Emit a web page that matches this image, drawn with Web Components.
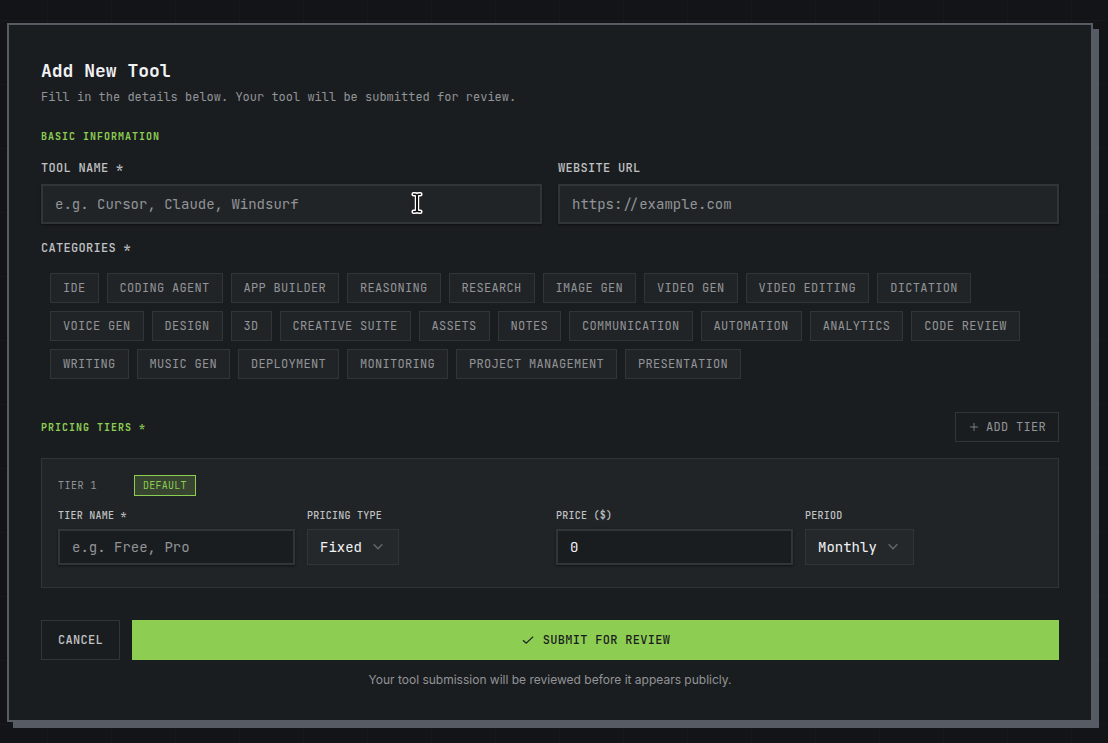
<!DOCTYPE html>
<html lang="en">
<head>
    <meta charset="UTF-8">
    <meta name="viewport" content="width=device-width, initial-scale=1.0">
    <title>Add New Tool</title>
    <style>
        :root {
            --page-bg: #131418;
            --page-line: #16181b;
            --panel-bg: #1a1d20;
            --raised-bg: #212427;
            --control-bg: #25282b;
            --frame: #575b63;
            --border: #323538;
            --text: #f1f2f4;
            --label: #c0c2c4;
            --muted: #929497;
            --accent: #8dce52;
            --mono: "JetBrains Mono", "DejaVu Sans Mono", monospace;
            --sans: Inter, "Liberation Sans", sans-serif;
        }

        body {
            margin: 0;
            padding: 23px 15px 15px 7px;
            font-family: var(--mono);
            font-size: 12px;
            line-height: 16px;
            color: var(--text);
            background-color: var(--page-bg);
            background-image:
                linear-gradient(to right, var(--page-line) 1px, transparent 1px),
                linear-gradient(to bottom, var(--page-line) 1px, transparent 1px);
            background-size: 64px 64px;
            background-position: 47px 20px;
        }
    </style>
</head>
<body>
    <tool-form></tool-form>

    <script>
        class FormPanel extends HTMLElement {
            constructor() {
                super();
                this.attachShadow({ mode: 'open' });
            }

            connectedCallback() {
                this.shadowRoot.innerHTML = `
                <style>
                    :host {
                        display: block;
                        padding: 32px;
                        background: var(--panel-bg);
                        border: 2px solid var(--frame);
                        box-shadow: 6px 6px 0 var(--frame);
                    }

                    h1 {
                        margin: 0;
                        font-size: 18px;
                        line-height: 28px;
                        font-weight: 600;
                    }

                    p {
                        margin: 4px 0 24px;
                        color: var(--muted);
                    }
                </style>
                <h1><slot name="title"></slot></h1>
                <p><slot name="description"></slot></p>
                <slot></slot>
                `;
            }
        }

        class SectionTitle extends HTMLElement {
            constructor() {
                super();
                this.attachShadow({ mode: 'open' });
            }

            connectedCallback() {
                this.shadowRoot.innerHTML = `
                <style>
                    :host {
                        display: block;
                        color: var(--accent);
                    }

                    h2 {
                        margin: 0;
                        font-size: 10px;
                        line-height: 15px;
                        font-weight: 600;
                        letter-spacing: 0.1em;
                        text-transform: uppercase;
                    }
                </style>
                <h2><slot></slot></h2>
                `;
            }
        }

        /* Text input with its label; "compact" is the smaller one used in a tier */
        class TextField extends HTMLElement {
            constructor() {
                super();
                this.attachShadow({ mode: 'open' });
            }

            connectedCallback() {
                const label = this.getAttribute('label');
                const type = this.getAttribute('type') || 'text';
                const placeholder = this.getAttribute('placeholder') || '';
                const value = this.getAttribute('value') || '';
                this.shadowRoot.innerHTML = `
                <style>
                    :host {
                        display: flex;
                        flex-direction: column;
                        gap: 8px;
                        position: relative;
                        min-width: 0;
                    }

                    label {
                        font-weight: 500;
                        letter-spacing: 0.025em;
                        text-transform: uppercase;
                        color: var(--label);
                    }

                    input {
                        box-sizing: border-box;
                        width: 100%;
                        height: 40px;
                        margin: 0;
                        padding: 0 12px;
                        font: 14px/20px var(--mono);
                        color: var(--text);
                        background: var(--raised-bg);
                        border: 2px solid var(--border);
                        border-radius: 0;
                        outline: none;
                        box-shadow: 0 1px 2px rgba(0, 0, 0, 0.5);
                        appearance: textfield;
                    }

                    input:focus {
                        border-color: var(--accent);
                    }

                    input::placeholder {
                        color: var(--muted);
                        opacity: 1;
                    }

                    :host([compact]) {
                        gap: 6px;
                    }

                    :host([compact]) label {
                        font-size: 10px;
                        line-height: 15px;
                    }

                    :host([compact]) input {
                        height: 36px;
                        background: var(--panel-bg);
                    }
                </style>
                <label for="field">${label}</label>
                <input id="field" type="${type}" placeholder="${placeholder}" value="${value}">
                <slot></slot>
                `;
            }
        }

        class SelectField extends HTMLElement {
            constructor() {
                super();
                this.attachShadow({ mode: 'open' });
            }

            connectedCallback() {
                const options = this.getAttribute('options').split(',');
                this.shadowRoot.innerHTML = `
                <style>
                    :host {
                        display: flex;
                        flex-direction: column;
                        align-items: flex-start;
                        gap: 6px;
                    }

                    label {
                        font-size: 10px;
                        line-height: 15px;
                        font-weight: 500;
                        letter-spacing: 0.025em;
                        text-transform: uppercase;
                        color: var(--label);
                    }

                    .control {
                        position: relative;
                        display: flex;
                    }

                    select {
                        box-sizing: border-box;
                        height: 36px;
                        margin: 0;
                        padding: 0 36px 0 12px;
                        font: 14px/20px var(--mono);
                        color: var(--text);
                        background: var(--control-bg);
                        border: 1px solid var(--border);
                        border-radius: 0;
                        appearance: none;
                        field-sizing: content;
                    }

                    svg {
                        position: absolute;
                        top: 10px;
                        right: 13px;
                        color: #66696c;
                        pointer-events: none;
                    }
                </style>
                <label for="select">${this.getAttribute('label')}</label>
                <div class="control">
                    <select id="select">
                        ${options.map((option) => `<option>${option}</option>`).join('')}
                    </select>
                    <svg width="16" height="16" viewBox="0 0 16 16" fill="none" stroke="currentColor" aria-hidden="true">
                        <path d="M3.7 5.3 8 9.8l4.3-4.5" stroke-width="1.3"/>
                    </svg>
                </div>
                `;
            }
        }

        class CategoryPicker extends HTMLElement {
            constructor() {
                super();
                this.attachShadow({ mode: 'open' });
                this.categories = [
                    'IDE', 'Coding Agent', 'App Builder', 'Reasoning', 'Research',
                    'Image Gen', 'Video Gen', 'Video Editing', 'Dictation',
                    'Voice Gen', 'Design', '3D', 'Creative Suite', 'Assets', 'Notes',
                    'Communication', 'Automation', 'Analytics', 'Code Review',
                    'Writing', 'Music Gen', 'Deployment', 'Monitoring',
                    'Project Management', 'Presentation'
                ];
            }

            connectedCallback() {
                this.shadowRoot.innerHTML = `
                <style>
                    :host {
                        display: block;
                    }

                    .label {
                        font-weight: 500;
                        letter-spacing: 0.025em;
                        text-transform: uppercase;
                        color: var(--label);
                    }

                    .chips {
                        display: flex;
                        flex-wrap: wrap;
                        gap: 8px;
                        margin-top: 8px;
                        padding: 8px;
                        border: 1px solid transparent;
                    }

                    button {
                        margin: 0;
                        padding: 6px 12px;
                        font: inherit;
                        letter-spacing: 0.025em;
                        text-transform: uppercase;
                        color: var(--muted);
                        background: var(--raised-bg);
                        border: 1px solid var(--border);
                        cursor: pointer;
                    }

                    button[aria-pressed="true"] {
                        color: var(--accent);
                        border-color: var(--accent);
                    }
                </style>
                <div class="label" id="label">Categories *</div>
                <div class="chips" role="group" aria-labelledby="label">
                    ${this.categories.map((name) => `<button type="button" aria-pressed="false">${name}</button>`).join('')}
                </div>
                `;

                this.shadowRoot.querySelectorAll('button').forEach((button) => {
                    button.addEventListener('click', () => {
                        const pressed = button.getAttribute('aria-pressed') === 'true';
                        button.setAttribute('aria-pressed', String(!pressed));
                    });
                });
            }
        }

        /* Variants: small, outline, primary */
        class ActionButton extends HTMLElement {
            constructor() {
                super();
                this.attachShadow({ mode: 'open' });
            }

            connectedCallback() {
                this.shadowRoot.innerHTML = `
                <style>
                    :host {
                        display: flex;
                    }

                    button {
                        display: flex;
                        align-items: center;
                        justify-content: center;
                        gap: 8px;
                        flex: 1;
                        margin: 0;
                        padding: 11px 16px;
                        font: inherit;
                        font-weight: 500;
                        letter-spacing: 0.025em;
                        text-transform: uppercase;
                        color: var(--label);
                        background: transparent;
                        border: 1px solid var(--border);
                        cursor: pointer;
                    }

                    :host([variant="small"]) button {
                        gap: 6px;
                        padding: 6px 12px;
                        font-weight: 400;
                        color: var(--muted);
                    }

                    :host([variant="primary"]) button {
                        color: #1a1d20;
                        background: var(--accent);
                        border-color: var(--accent);
                    }
                </style>
                <button type="button"><slot name="icon"></slot><slot></slot></button>
                `;
            }
        }

        class TierCard extends HTMLElement {
            constructor() {
                super();
                this.attachShadow({ mode: 'open' });
            }

            connectedCallback() {
                this.shadowRoot.innerHTML = `
                <style>
                    :host {
                        display: block;
                        padding: 16px 16px 22px;
                        background: var(--raised-bg);
                        border: 1px solid var(--border);
                    }

                    header {
                        display: flex;
                        align-items: center;
                        gap: 12px;
                        margin-bottom: 12px;
                        font-size: 10px;
                        line-height: 15px;
                        text-transform: uppercase;
                    }

                    .name {
                        min-width: 64px;
                        letter-spacing: 0.05em;
                        color: var(--muted);
                    }

                    .badge {
                        padding: 2px 8px;
                        letter-spacing: 0.025em;
                        color: var(--accent);
                        background: #374430;
                        border: 1px solid var(--accent);
                    }

                    .fields {
                        display: grid;
                        grid-template-columns: repeat(4, 1fr);
                        gap: 12px;
                    }
                </style>
                <header>
                    <span class="name"><slot name="name"></slot></span>
                    <span class="badge">Default</span>
                </header>
                <div class="fields">
                    <text-field compact label="Tier name *" placeholder="e.g. Free, Pro"></text-field>
                    <select-field label="Pricing type" options="Fixed,Usage-based,Custom"></select-field>
                    <text-field compact label="Price ($)" type="number" value="0"></text-field>
                    <select-field label="Period" options="Monthly,Yearly,One-time"></select-field>
                </div>
                `;
            }
        }

        class ToolForm extends HTMLElement {
            constructor() {
                super();
                this.attachShadow({ mode: 'open' });
            }

            connectedCallback() {
                this.shadowRoot.innerHTML = `
                <style>
                    :host {
                        display: block;
                    }

                    .row {
                        display: grid;
                        grid-template-columns: 1fr 1fr;
                        gap: 16px;
                        margin: 16px 0;
                    }

                    .pricing {
                        display: flex;
                        align-items: center;
                        justify-content: space-between;
                        margin: 24px 0 16px;
                    }

                    .actions {
                        display: flex;
                        gap: 12px;
                        margin-top: 32px;
                    }

                    .submit {
                        flex: 1;
                    }

                    .note {
                        margin: 12px 0 0;
                        font-family: var(--sans);
                        text-align: center;
                        color: var(--muted);
                    }

                    /* Text pointer resting over the first field */
                    .pointer {
                        position: absolute;
                        left: 75%;
                        bottom: 9px;
                        transform: translateX(-50%);
                        pointer-events: none;
                    }
                </style>
                <form-panel>
                    <span slot="title">Add New Tool</span>
                    <span slot="description">Fill in the details below. Your tool will be submitted for review.</span>

                    <section-title>Basic Information</section-title>
                    <div class="row">
                        <text-field label="Tool name *" placeholder="e.g. Cursor, Claude, Windsurf">
                            <svg class="pointer" width="12" height="24" viewBox="0 0 12 24" fill="none" stroke-linecap="round" stroke-linejoin="round" aria-hidden="true">
                                <path d="M2.6 3.2h1.2q2.2 0 2.2 1.8q0-1.8 2.2-1.8h1.2M6 5v14M2.6 20.8h1.2q2.2 0 2.2-1.8q0 1.8 2.2 1.8h1.2" stroke="#fff" stroke-width="4.4"/>
                                <path d="M2.6 3.2h1.2q2.2 0 2.2 1.8q0-1.8 2.2-1.8h1.2M2.6 20.8h1.2q2.2 0 2.2-1.8q0 1.8 2.2 1.8h1.2" stroke="#111" stroke-width="1.4"/>
                                <path d="M6 5v14" stroke="#111" stroke-width="2"/>
                            </svg>
                        </text-field>
                        <text-field label="Website URL" type="url" placeholder="https://example.com"></text-field>
                    </div>
                    <category-picker></category-picker>

                    <div class="pricing">
                        <section-title>Pricing Tiers *</section-title>
                        <action-button variant="small">
                            <svg slot="icon" width="12" height="12" viewBox="0 0 12 12" fill="none" stroke="currentColor" aria-hidden="true">
                                <path d="M6 2v8M2 6h8" stroke-opacity="0.8"/>
                            </svg>
                            Add Tier
                        </action-button>
                    </div>
                    <tier-card><span slot="name">Tier 1</span></tier-card>

                    <div class="actions">
                        <action-button variant="outline">Cancel</action-button>
                        <action-button class="submit" variant="primary">
                            <svg slot="icon" width="14" height="14" viewBox="0 0 14 14" fill="none" stroke="currentColor" stroke-width="1.2" aria-hidden="true">
                                <path d="M2 7.2 5.2 10.2 12.2 3.6"/>
                            </svg>
                            Submit for Review
                        </action-button>
                    </div>
                    <p class="note">Your tool submission will be reviewed before it appears publicly.</p>
                </form-panel>
                `;
            }
        }

        customElements.define('form-panel', FormPanel);
        customElements.define('section-title', SectionTitle);
        customElements.define('text-field', TextField);
        customElements.define('select-field', SelectField);
        customElements.define('category-picker', CategoryPicker);
        customElements.define('action-button', ActionButton);
        customElements.define('tier-card', TierCard);
        customElements.define('tool-form', ToolForm);
    </script>
</body>
</html>
